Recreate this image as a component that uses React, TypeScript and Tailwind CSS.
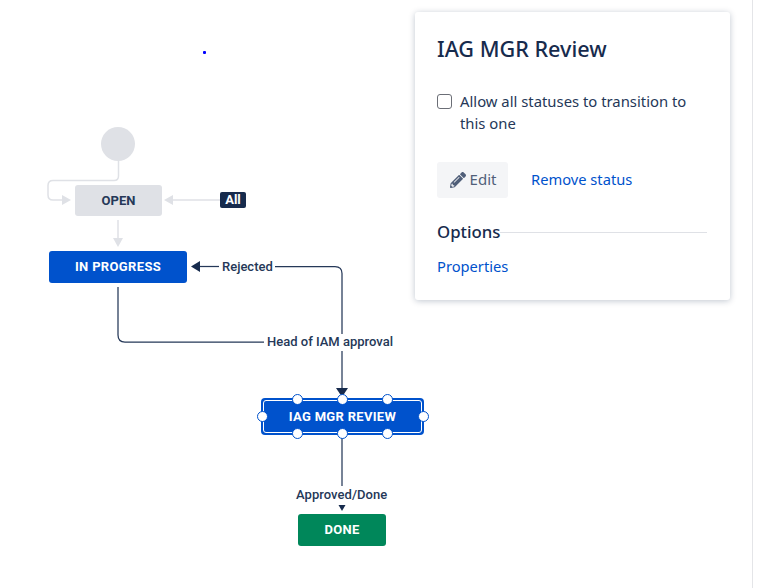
import React from 'react';
import { FaPencilAlt } from 'react-icons/fa';

// Positions on the workflow canvas are the content here, so nodes are absolute
interface NodeProps {
  label: string;
  className: string;
}

function Node({ label, className }: NodeProps) {
  return (
    <div className={`absolute flex items-center justify-center rounded-[3px] text-[13px] font-bold ${className}`}>
      {label}
    </div>
  );
}

function EdgeLabel({ label, className }: { label: string; className: string }) {
  return (
    <div className={`absolute whitespace-nowrap text-[13px] leading-[16px] font-medium text-[#253858] ${className}`}>
      {label}
    </div>
  );
}

function Handle() {
  return <div className="h-[11px] w-[11px] rounded-full border border-[#0052cc] bg-white" />;
}

function HandleRow({ className }: { className: string }) {
  return (
    <div className={`absolute left-[31px] flex gap-[34px] ${className}`}>
      <Handle />
      <Handle />
      <Handle />
    </div>
  );
}

function Connectors() {
  return (
    <svg className="absolute top-0 left-0" width="764" height="588" fill="none">
      {/* greyed out transitions */}
      <g stroke="#dfe1e6" strokeWidth="1.5">
        <path d="M118.5 160V176Q118.5 180.5 114 180.5H53Q48 180.5 48 185.5V195Q48 200 53 200H63" />
        <path d="M172 200H220" />
        <path d="M118 220V239" />
      </g>
      <g fill="#dfe1e6">
        <path d="M71 200L62 195V205Z" />
        <path d="M164 200L173 195V205Z" />
        <path d="M118 247L113 238H123Z" />
      </g>
      {/* active transitions */}
      <g stroke="#253858" strokeWidth="1.25">
        <path d="M199 266.5H219" />
        <path d="M275 266.5H335Q342 266.5 342 273.5V334" />
        <path d="M342 351V389" />
        <path d="M118 287V335Q118 342 125 342H264" />
        <path d="M342 434V486" />
      </g>
      <g fill="#172b4d">
        <path d="M191 266.5L200 261V272Z" />
        <path d="M342 397L336 388H348Z" />
        <path d="M342 511L338.5 505H345.5Z" />
      </g>
    </svg>
  );
}

function Canvas() {
  return (
    <div className="absolute inset-0 font-['Roboto',sans-serif]">
      <Connectors />
      <div className="absolute top-[51px] left-[203px] h-[3px] w-[3px] rounded-[1px] bg-[#0000ff]" />
      <div className="absolute top-[127px] left-[101px] h-[34px] w-[34px] rounded-full bg-[#dfe1e6]" />

      <Node label="OPEN" className="top-[185px] left-[75px] h-[31px] w-[87px] bg-[#dfe1e6] text-[#253858]" />
      <div className="absolute top-[192px] left-[220px] flex h-[16px] w-[26px] items-center justify-center rounded-[2px] bg-[#172b4d] text-[13px] font-bold text-white">
        All
      </div>
      <Node
        label="IN PROGRESS"
        className="top-[251px] left-[49px] h-[32px] w-[138px] bg-[#0052cc] tracking-[0.35px] text-white"
      />
      <EdgeLabel label="Rejected" className="top-[259px] left-[222px]" />
      <EdgeLabel label="Head of IAM approval" className="top-[334px] left-[267px]" />

      <div className="absolute top-[398px] left-[261px] h-[37px] w-[163px]">
        <div className="h-full w-full rounded-[4px] bg-[#0052cc] p-[2px]">
          <div className="flex h-full w-full items-center justify-center rounded-[3px] border border-white text-[13px] font-bold tracking-[0.3px] text-white">
            IAG MGR REVIEW
          </div>
        </div>
        <HandleRow className="top-[-4px]" />
        <HandleRow className="top-[30px]" />
        <div className="absolute top-[13px] left-[-4px] flex w-[172px] justify-between">
          <Handle />
          <Handle />
        </div>
      </div>

      <EdgeLabel label="Approved/Done" className="top-[487px] left-[296px] tracking-[0.05px]" />
      <Node
        label="DONE"
        className="top-[514px] left-[298px] h-[32px] w-[88px] bg-[#00875a] tracking-[0.3px] text-white"
      />
    </div>
  );
}

function StatusPanel() {
  return (
    <div className="absolute top-[12px] left-[415px] h-[288px] w-[315px] rounded-[3px] bg-white pt-[22px] pr-[23px] pl-[22px] font-['Noto_Sans',sans-serif] text-[#253858] shadow-[0_1px_6px_rgba(9,30,66,0.25)]">
      <h2 className="text-[21.6px] leading-[30px] font-medium text-[#172b4d]">IAG MGR Review</h2>
      <label className="mt-[26px] flex items-start gap-[8px] text-[14.85px] leading-[22px]">
        <span className="mt-[4px] h-[15px] w-[15px] shrink-0 rounded-[3px] border-[1.5px] border-[#6b6e76] bg-white" />
        <span>
          Allow all statuses to transition to
          <br />
          this one
        </span>
      </label>
      <div className="mt-[28px] flex items-center">
        <button className="flex h-[36px] w-[71px] items-center justify-center gap-[4px] rounded-[3px] bg-[#f4f5f7] pl-[1px] text-[15px] text-[#505f79]">
          <FaPencilAlt size={16} color="#505f79" />
          <span className="-translate-y-px">Edit</span>
        </button>
        <a className="ml-[23px] -translate-y-px text-[14.7px] text-[#0052cc]">Remove status</a>
      </div>
      <div className="mt-[23px] flex items-center">
        <span className="text-[16.8px] leading-[22px] font-medium text-[#172b4d]">Options</span>
        <div className="h-px flex-1 bg-[#dfe1e6]" />
      </div>
      <a className="mt-[12px] block text-[14.7px] leading-[22px] text-[#0052cc]">Properties</a>
    </div>
  );
}

export default function App() {
  return (
    <div className="relative h-[588px] w-[764px] overflow-hidden bg-white">
      <Canvas />
      <StatusPanel />
      <div className="absolute top-0 left-[752px] h-full w-px bg-[#e4e5e8]" />
    </div>
  );
}
